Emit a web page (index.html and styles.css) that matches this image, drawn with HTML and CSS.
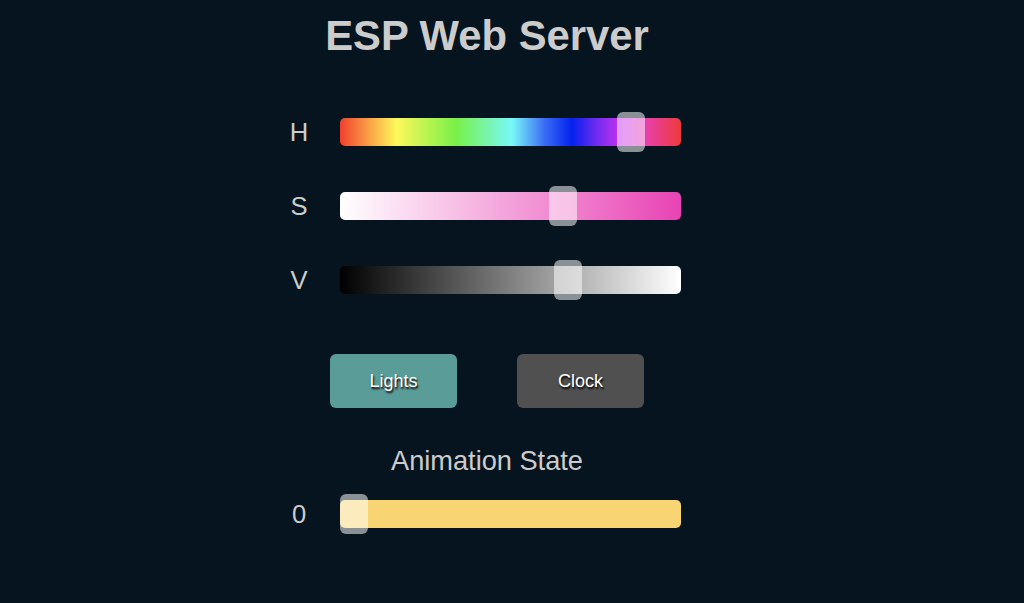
FILE: index.html
```html
<!DOCTYPE html>
<html lang="en">
<head>
<meta charset="utf-8">
<title>ESP Web Server</title>
<link rel="stylesheet" href="styles.css">
</head>
<body>
<main class="page">
  <h1 class="title">ESP Web Server</h1>

  <section class="sliders">
    <div class="row">
      <span class="label">H</span>
      <div class="track track-hue"><span class="thumb" style="--p: 0.885"></span></div>
    </div>
    <div class="row">
      <span class="label">S</span>
      <div class="track track-sat"><span class="thumb" style="--p: 0.668"></span></div>
    </div>
    <div class="row">
      <span class="label">V</span>
      <div class="track track-val"><span class="thumb" style="--p: 0.684"></span></div>
    </div>
  </section>

  <div class="buttons">
    <button class="btn btn-lights" type="button">Lights</button>
    <button class="btn btn-clock" type="button">Clock</button>
  </div>

  <h2 class="subtitle">Animation State</h2>
  <div class="row row-anim">
    <span class="label">0</span>
    <div class="track track-anim"><span class="thumb" style="--p: 0"></span></div>
  </div>
</main>
</body>
</html>
```

FILE: styles.css
```css
* {
  box-sizing: border-box;
}

html, body {
  margin: 0;
  padding: 0;
  background: #061420;
  height: 100%;
}

body {
  font-family: "Liberation Sans", Arial, sans-serif;
  color: #cccccc;
}

.page {
  display: flex;
  flex-direction: column;
  align-items: center;
  padding-right: 50px;
}

.title {
  margin: 12px 0 0;
  font-size: 41.8px;
  line-height: 48px;
  font-weight: bold;
  color: #cccccc;
}

.sliders {
  display: flex;
  flex-direction: column;
  gap: 34px;
  margin-top: 52px;
}

.row {
  display: flex;
  align-items: center;
  gap: 26px;
  height: 40px;
  margin-right: 9px;
}

.label {
  width: 30px;
  text-align: center;
  font-size: 25.6px;
  line-height: 40px;
  color: #cccccc;
}

.track {
  position: relative;
  width: 341px;
  height: 28px;
  border-radius: 5px;
}

.thumb {
  position: absolute;
  top: -6px;
  left: calc(var(--p, 0) * (100% - 28px));
  width: 28px;
  height: 40px;
  border-radius: 6px;
  background: rgba(255, 255, 255, 0.53);
}

.track-hue {
  background: linear-gradient(to right,
    #f0402d 0%,
    #f99a45 8%,
    #fdf85a 16.5%,
    #78f048 34%,
    #78f8fa 50.5%,
    #3a6cf4 60%,
    #0422ee 68%,
    #7a2cf0 76%,
    #cc33ee 83%,
    #e840a8 90%,
    #ee3a3a 100%);
}

.track-sat {
  background: linear-gradient(to right, #ffffff 0%, #e843b4 100%);
}

.track-val {
  background: linear-gradient(to right, #000000 0%, #ffffff 100%);
}

.track-anim {
  background: #f9d472;
}

.buttons {
  display: flex;
  gap: 60px;
  margin-top: 54px;
}

.btn {
  width: 127px;
  height: 54px;
  border: none;
  border-radius: 6px;
  font-family: "Liberation Sans", Arial, sans-serif;
  font-size: 18px;
  color: #ffffff;
  text-shadow: 1px 2px 2px #000000;
  cursor: pointer;
}

.btn-lights {
  background: #599c98;
}

.btn-clock {
  background: #505050;
}

.subtitle {
  margin: 37px 0 0;
  font-size: 27.2px;
  line-height: 32px;
  font-weight: normal;
  color: #cccccc;
}

.row-anim {
  margin-top: 17px;
}
```
